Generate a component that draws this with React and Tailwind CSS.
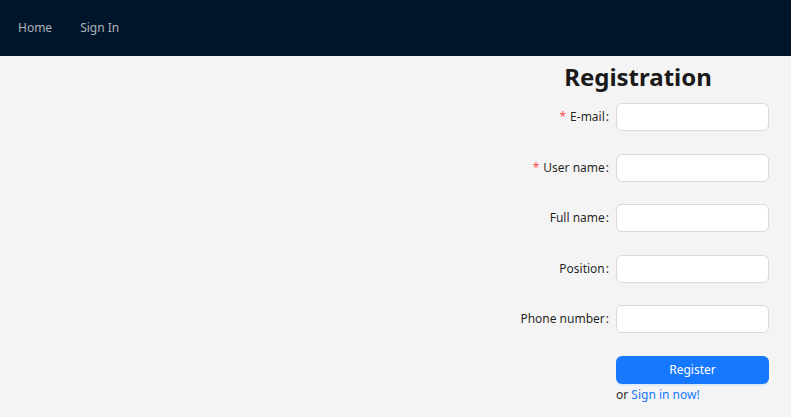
import { useState } from "react";

const fields = [
  { key: "email", label: "E-mail", required: true },
  { key: "username", label: "User name", required: true },
  { key: "fullname", label: "Full name" },
  { key: "position", label: "Position" },
  { key: "phone", label: "Phone number" },
];

export default function App() {
  const [form, setForm] = useState({});

  return (
    <div className="min-h-[417px] bg-[#f4f4f4] font-['Noto_Sans',sans-serif] text-[rgba(0,0,0,0.88)]">
      <header className="h-[56px] bg-[#001529] flex items-center pl-[18px] gap-[28px] text-[12px] text-[rgba(255,255,255,0.68)]">
        <a href="#" className="hover:text-white">Home</a>
        <a href="#" className="hover:text-white">Sign In</a>
      </header>

      <main className="flex justify-end pr-[22px]">
        <form className="w-[262px]" onSubmit={(e) => e.preventDefault()}>
          <h2 className="text-center font-bold text-[24px] leading-[36px] mt-[3px] mb-[8px] text-[#1a1a1a]">
            Registration
          </h2>

          <div className="flex flex-col gap-[22.5px]">
            {fields.map((f) => (
              <div key={f.key} className="flex items-center h-[28px]">
                <label className="w-[109px] shrink-0 text-right pr-[7px] text-[12px] whitespace-nowrap">
                  {f.required && <span className="text-[#ff4d4f] mr-[4px]">*</span>}
                  {f.label}
                  <span className="ml-[1px]">:</span>
                </label>
                <input
                  value={form[f.key] || ""}
                  onChange={(e) => setForm({ ...form, [f.key]: e.target.value })}
                  className="w-[153px] h-[28px] rounded-[6px] border border-[#d9d9d9] bg-white px-[10px] text-[12px] outline-none focus:border-[#4096ff]"
                />
              </div>
            ))}

            <div className="flex">
              <div className="w-[109px] shrink-0" />
              <div className="w-[153px]">
                <button
                  type="submit"
                  className="w-full h-[28px] rounded-[6px] bg-[#1677ff] text-white text-[12px] shadow-[0_2px_0_rgba(5,145,255,0.1)] hover:bg-[#4096ff]"
                >
                  Register
                </button>
                <div className="text-[12px] leading-[20px] mt-[1px]">
                  or <a href="#" className="text-[#1677ff]">Sign in now!</a>
                </div>
              </div>
            </div>
          </div>
        </form>
      </main>
    </div>
  );
}
